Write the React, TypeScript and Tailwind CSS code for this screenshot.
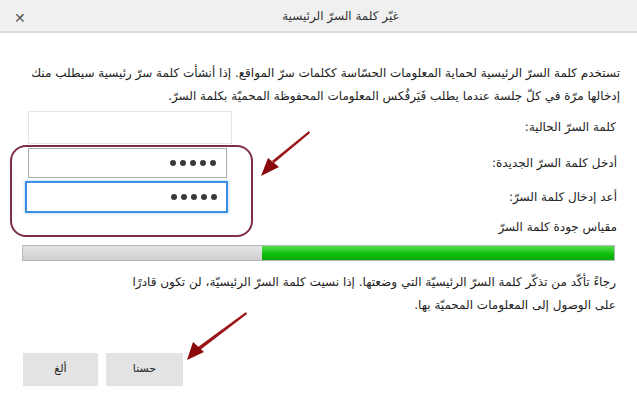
import React from "react";

const font = { fontFamily: '"DejaVu Sans", "Noto Sans", sans-serif' };

function Dots() {
  return (
    <div dir="ltr" className="flex gap-[4px]">
      {[0, 1, 2, 3, 4].map((i) => (
        <span key={i} className="block w-[6px] h-[6px] rounded-full bg-[#3a3a3a]" />
      ))}
    </div>
  );
}

export default function App() {
  return (
    <div className="relative w-[637px] h-[409px] bg-white overflow-hidden text-[#222]" style={font}>
      {/* title bar */}
      <div className="h-[33px] bg-[#f0f0f0] border-b-[2px] border-[#dcdcdc] flex items-center relative">
        <span className="absolute left-[14px] top-[8px] text-[14px] text-[#555]">✕</span>
        <div dir="rtl" className="w-full text-center text-[12px] text-[#333] pl-[44px]">
          غيّر كلمة السرّ الرئيسية
        </div>
      </div>

      <div dir="rtl" className="px-[17px] pt-[29px] text-[12px] leading-[23px]">
        <div className="whitespace-nowrap">
          تستخدم كلمة السرّ الرئيسية لحماية المعلومات الحسّاسة ككلمات سرّ المواقع. إذا أنشأت كلمة سرّ رئيسية سيطلب منك
        </div>
        <div className="whitespace-nowrap">
          إدخالها مرّة في كلّ جلسة عندما يطلب فَيَرفُكس المعلومات المحفوظة المحميّة بكلمة السرّ.
        </div>

        <div className="mt-[3px] flex items-center justify-between h-[33px] pl-[11px]">
          <span className="pr-[4px]">كلمة السرّ الحالية:</span>
          <div className="w-[204px] h-[33px] border border-[#e6e6e6] bg-white" />
        </div>
        <div className="mt-[4px] flex items-center justify-between h-[30px] pl-[11px]">
          <span className="pr-[3px]">أدخل كلمة السرّ الجديدة:</span>
          <div className="w-[199px] h-[30px] border border-[#acacac] bg-white flex items-center justify-start pr-[10px]">
            <Dots />
          </div>
        </div>
        <div className="mt-[3px] flex items-center justify-between h-[32px] pl-[8px]">
          <span className="pr-[3px]">أعد إدخال كلمة السرّ:</span>
          <div className="w-[203px] h-[32px] border-[2px] border-[#3d8ee6] bg-white shadow-[0_0_3px_#9cc8f5] flex items-center justify-start pr-[9px]">
            <Dots />
          </div>
        </div>
        <div className="mt-[3px] h-[25px] pr-[3px]">مقياس جودة كلمة السرّ</div>

        <div dir="ltr" className="mt-[4px] ml-[5px] mr-[5px] h-[16px] border border-[#b9b9b9] flex bg-gradient-to-b from-[#e4e4e4] to-[#cfcfcf]">
          <div className="w-[239px]" />
          <div className="flex-1 bg-gradient-to-b from-[#4ee04e] via-[#0fc40f] to-[#08a808]" />
        </div>

        <div className="mt-[10px] pr-[4px] whitespace-nowrap">
          رجاءً تأكّد من تذكّر كلمة السرّ الرئيسيّة التي وضعتها. إذا نسيت كلمة السرّ الرئيسيّة، لن تكون قادرًا
        </div>
        <div className="pr-[4px] whitespace-nowrap">على الوصول إلى المعلومات المحميّة بها.</div>
      </div>

      <div className="absolute left-[23px] top-[353px] flex gap-[8px] text-[11px] text-[#222]">
        <div className="w-[75px] h-[33px] bg-[#e3e3e3] flex items-center justify-center">ألغ</div>
        <div className="w-[77px] h-[33px] bg-[#e3e3e3] flex items-center justify-center">حسنا</div>
      </div>

      {/* annotation box */}
      <div className="absolute left-[10px] top-[145px] w-[243px] h-[92px] border-[2px] border-[#7e3043] rounded-[16px] pointer-events-none" />

      {/* arrows */}
      <svg className="absolute inset-0 pointer-events-none" width="637" height="409" viewBox="0 0 637 409">
        <polygon points="309,131 310,133 274,163 272,161" fill="#9a1515" />
        <polygon points="261,176 268,158 279,167" fill="#8a0b0b" />
        <polygon points="246,312 247,314 200,350 198,347" fill="#9a1515" />
        <polygon points="187,360 193,342 204,352" fill="#8a0b0b" />
      </svg>
    </div>
  );
}
